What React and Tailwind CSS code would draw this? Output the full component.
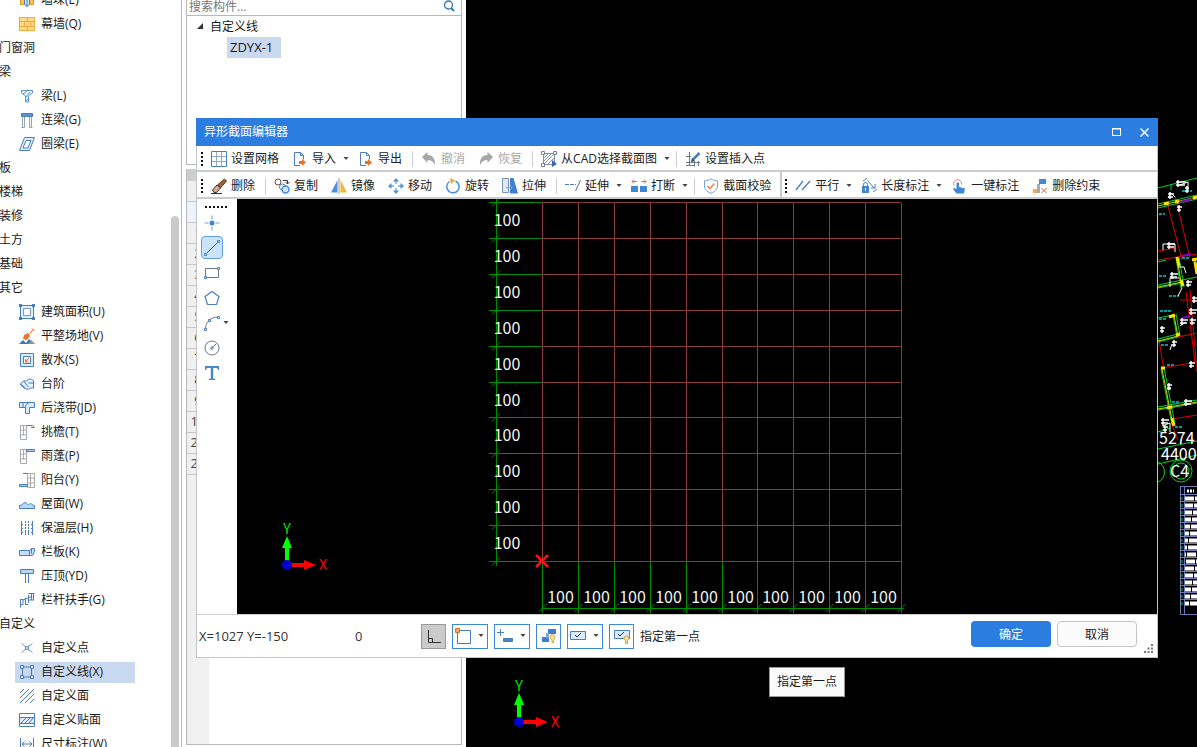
import clsx from 'clsx';

const Icon = ({ children, size = 16 }) => (
  <svg width={size} height={size} viewBox="0 0 16 16" fill="none" stroke="#4a7ebb" className="shrink-0" aria-hidden="true">
    {children}
  </svg>
);

// Small icons, all on a 16x16 grid
const icons = {
  pier: (
    <>
      <path d="M1.500 3.500h4v9h-4zM10.500 3.500h4v9h-4z" fill="#ffc04d" stroke="#e59a1c" />
      <path d="M5.500 5.500l2.500-2 2.500 2v7l-2.500 2-2.500-2zM8 7v7" fill="#cfe6ff" />
    </>
  ),
  curtain: (
    <path d="M.5 1.500h15v13H.5zM.5 5.500h15M.5 10.500h15M8.500 1.500v4M5.500 5.500v5M11.500 5.500v5M8.500 10.500v4" fill="#ffd98c" stroke="#eeab3c" />
  ),
  beam: <path d="M2.500 2.500h11v2.500l-4 3v6h-3v-6l-4-3zM4 6l4-3M7 9l4-5M7 13l3-3" fill="#e9f4ff" stroke="#5f93c9" />,
  link: (
    <>
      <path d="M2.500 1.500h11v3h-11z" fill="#5f95cf" />
      <path d="M3.500 5v10.500M5.500 5v10.500M10.500 5v10.500M12.500 5v10.500M2.500 15.500h3M10.500 15.500h3" stroke="#98a2ad" />
    </>
  ),
  ring: (
    <>
      <path d="M5.500 1.500h10l-5 13H.5z" fill="#dcebff" />
      <path d="M7 4.500h5l-3 7.500H4z" fill="#fff" />
    </>
  ),
  area: (
    <>
      <path d="M1.500 1.500h13v13h-13z" fill="#dcf0ff" />
      <path d="M4.500 4.500h7v7h-7z" fill="#fff" stroke="#8798aa" />
      <path d="M0 0h3v3H0zM13 0h3v3h-3zM0 13h3v3H0zM13 13h3v3h-3z" fill="#4a7ebb" stroke="none" />
    </>
  ),
  level: (
    <>
      <path d="M0 16l4-4 3 3 3-4 6 5z" fill="#3e77b6" stroke="none" />
      <path d="M9 16l3-4 4 4z" fill="#929292" stroke="none" />
      <path d="M14.500 1l-5 6M13 .5l2.500 2.500" stroke="#ed7131" />
      <path d="M9 5l2 3-3 4-4-1 1-4z" fill="#ed7131" stroke="none" />
    </>
  ),
  apron: (
    <>
      <path d="M1.500 1.500h13v13h-13z" fill="#d8ecff" />
      <path d="M4.500 4.500h7v7h-7z" fill="#fff" />
      <path d="M10 6l-3.500 3.500M6.500 7v3h3" stroke="#e0603a" />
    </>
  ),
  steps: <path d="M1.500 8l3-3h3l2-2h3l2 2v7h-3l-1 1h-4l-5-4zM1.500 8l5 4M4.500 5l5 6M9.500 7h5" fill="#e4f1ff" />,
  strip: <path d="M.5 2.500h15v5h-5v6h-4v-6h-6zM6.500 7.500c0-3 2-5 5-5M4 2.500v5" fill="#d9ebff" />,
  eaves: (
    <>
      <path d="M1.500 1.500h6v14h-6zM1.500 6h6M1.500 11h6M4.500 1.500v4.500M4.500 6v5" stroke="#a5aab1" />
      <path d="M7.500 1.500h6l2 2M12 3.500h3" />
    </>
  ),
  canopy: (
    <>
      <path d="M1.500 1.500h6v14h-6zM1.500 6h6M1.500 11h6M4.500 1.500v4.500M4.500 6v5" stroke="#a5aab1" />
      <path d="M7.500 1.500h8v2h-8z" fill="#a9cdf4" />
    </>
  ),
  balcony: (
    <>
      <path d="M8.500 1.500h7v14h-7zM8.500 6h7M8.500 11h7M11.500 1.500v14" stroke="#a5aab1" />
      <path d="M4 1.500h4.500M.5 12.500h8v2h-8z" fill="#a9cdf4" />
    </>
  ),
  roof: <path d="M.5 12.500v-3c3 0 4-3 5.500-3s2 2 3.500 2 1-1 2-1 2 2 4 2v3z" fill="#b8d6f7" />,
  insulation: (
    <>
      <path d="M2.500 1v14M13.500 1v14" />
      <path d="M6.500 1v14M9.500 1v14" strokeDasharray="2 1" />
      <path d="M3 4.500h10M3 8.500h10M3 12.500h10" strokeDasharray="1 2" />
    </>
  ),
  panel: <path d="M.5 6.500h10l2-2h3v3l-2 4H.5zM10.500 6.500v5M12.500 4.500v5" fill="#c5defa" />,
  coping: (
    <>
      <path d="M1.500 1.500h13v4h-13z" fill="#b6d5f8" />
      <path d="M6.500 6v9M9.500 6v9" />
    </>
  ),
  rail: <path d="M1.500 7v8.500M1 7.500h3v5H1.500M6.500 6v7M4 8l5-2M9.500 3v8M6.500 12.500h3M9.500 5h4M12.500 1v7M9.500 1.500h6M10 8h5M14.500 2v6" />,
  point: (
    <>
      <path d="M2.500 3.500L7 7M13.500 3.500L9 7M2.500 12.500L7 9M13.500 12.500L9 9" stroke="#6f93bb" />
      <circle cx="8" cy="8" r="1.500" />
    </>
  ),
  line: (
    <>
      <path d="M3.500 4v8.500M12.500 4v8.500M4 3h8M4 13h8" />
      <path d="M1.500 1.500h3v3h-3zM11.500 1.500h3v3h-3zM1.500 11.500h3v3h-3zM11.500 11.500h3v3h-3z" fill="#dfeaf8" />
    </>
  ),
  face: <path d="M1 5l4-4M1 10l9-9M1 15l14-14M6 15l9-9M11 15l4-4" />,
  veneer: (
    <>
      <path d="M.5 1.500h15v13H.5z" fill="#fff" />
      <path d="M.5 5.500h15v6H.5z" fill="#d9eafe" />
      <path d="M2 11l5-5M6 11l5-5M10 11l4-5" />
    </>
  ),
  dimension: <path d="M1.500 2v12M14.500 2v12M3 8h10M5.500 5.500L3 8l2.500 2.500M10.500 5.500L13 8l-2.500 2.500" />,

  grid: (
    <>
      <path d="M.5.5h15v15H.5z" />
      <path d="M5.500 1v14M10.500 1v14M1 5.500h14M1 10.500h14" stroke="#8fa9c6" />
    </>
  ),
  file: (
    <>
      <path d="M8 14.500H2.500v-13h6l3 3v4M8.500 1.500v3h3" />
      <path d="M7 10h3V8l4 3.500-4 3.500v-2H7z" fill="#e8702a" stroke="none" />
    </>
  ),
  undo: <path d="M1 6l5.500-5v3C11 4 14.500 7 14 14c-1.500-3.500-4-5-7.500-5v3z" fill="#a3a6aa" stroke="none" />,
  redo: <path d="M15 6L9.500 1v3C5 4 1.500 7 2 14c1.500-3.500 4-5 7.500-5v3z" fill="#a3a6aa" stroke="none" />,
  cad: (
    <>
      <path d="M2.500 2.500h11v11h-11zM3 7l4-4M3 10l7-7M3 13l10-10M7 13l6-6" stroke="#7d90a5" />
      <path d="M.5.5h3v3h-3zM12.500.5h3v3h-3zM.5 12.500h3v3h-3z" fill="#fff" stroke="#70859c" />
      <path d="M11 9l5 4-5 3z" fill="#2f6bb5" stroke="none" />
    </>
  ),
  insert: (
    <>
      <path d="M4.500 1v14M1 5.500h5M1 11.500h14M9.500 10v5.500M1 14.500h9M13.500 10v5" stroke="#68798c" />
      <path d="M14.500 2L8 8.500" strokeWidth="2.500" />
      <path d="M6 11l1-4 3 3z" fill="#24466e" stroke="none" />
    </>
  ),
  erase: (
    <>
      <path d="M0 15.500h11" stroke="#333" />
      <path d="M13.500 1l2 2-6 7-3-3z" fill="#9b6533" stroke="#603714" />
      <path d="M6 7l3.500 3-4 4.500H3L1.500 12z" fill="#e6a592" stroke="#333" />
    </>
  ),
  copy: (
    <>
      <circle cx="4" cy="4" r="3" stroke="#555" />
      <path d="M9 2.500h4.500v3M11.500 4l2 2 2-2" stroke="#333" />
      <circle cx="8.500" cy="9" r="3" stroke="#777" />
      <circle cx="11.500" cy="11.500" r="3.500" fill="#cfe7ff" stroke="#3f8ee0" strokeWidth="1.500" />
    </>
  ),
  mirror: (
    <>
      <path d="M6.500 2v12.500H0z" fill="#4d91dc" stroke="none" />
      <path d="M9.500 2v12.500H16z" fill="#f0b63e" stroke="none" />
      <path d="M8 0v16" stroke="#999" />
    </>
  ),
  move: (
    <>
      <path d="M8 1v5M8 10v5M1 8h5M10 8h5" />
      <path d="M8 0l3 3.500H5zM8 16l3-3.500H5zM0 8l3.500-3v6zM16 8l-3.500-3v6z" fill="#4a90e0" stroke="none" />
    </>
  ),
  rotate: (
    <>
      <path d="M10.500 3a6.200 6.200 0 1 1-6 .5" stroke="#4a90d9" strokeWidth="1.500" />
      <path d="M5 0l5 2.500L6 6z" fill="#f0a03c" stroke="none" />
    </>
  ),
  stretch: (
    <>
      <path d="M.5.5h6v14h-6z" fill="#dbe9f8" stroke="#7c93ab" />
      <path d="M8 0h3.500L16 15.500H8z" fill="#3f81cc" stroke="none" />
      <path d="M4 9.500h6M8 7l2.500 2.500L8 12" stroke="#ee8040" />
    </>
  ),
  extend: (
    <>
      <path d="M0 6.500h11" strokeDasharray="4 1" />
      <path d="M15.500 2l-5 11" stroke="#59718c" />
    </>
  ),
  split: (
    <>
      <path d="M0 8h7v6H0zM9 8h7v6H9z" fill="#3f86d4" stroke="none" />
      <path d="M1 3.500h5M3 1.500l-2 2 2 2M10 3.500h5M13 1.500l2 2-2 2" stroke="#e8702a" />
    </>
  ),
  shield: (
    <>
      <path d="M8 .8c2 1.500 4 2 6.500 2v5c0 4-3 6-6.500 7.500C4.500 13.800 1.500 11.800 1.500 7.800v-5c2.500 0 4.500-.5 6.500-2z" stroke="#6f9fd0" />
      <path d="M4.500 8l2.500 2.500 4.500-5" stroke="#ee8040" strokeWidth="1.500" />
    </>
  ),
  parallel: <path d="M1 12l7-9M7 12l8-9" strokeWidth="1.300" />,
  length: (
    <>
      <path d="M1 8h7v7H1z" fill="#4385cb" stroke="none" />
      <path d="M2.500 8V6.500a2 2 0 0 1 4 0V8M2 3l4-3M6.500 2.500l7 8M10 10h4v-4M12 14l4-3" />
      <path d="M4.500 10v3" stroke="#fff" />
    </>
  ),
  touch: (
    <>
      <path d="M3 7.500a4 4 0 1 1 7.500-1" stroke="#ee8450" />
      <path d="M5.500 4.500h2.500V9l6 1.500-1 5H5.500L2 11l1-1 2.500 1z" fill="#3f86d4" stroke="none" />
    </>
  ),
  constraint: (
    <>
      <path d="M7 1h7v5H7z" fill="#4289d8" stroke="none" />
      <path d="M1 11h6v4H1z" fill="#f0a85a" stroke="none" />
      <path d="M5 6h3v9H5z" fill="#a4abb3" stroke="none" />
      <path d="M9.500 10l5 5M14.500 10l-5 5" stroke="#cf5a3c" />
    </>
  ),

  dPoint: (
    <>
      <path d="M8 .5v4M8 11.500v4M.5 8h4M11.500 8h4" stroke="#7d9cbd" />
      <circle cx="8" cy="8" r="2.500" fill="#3f86d4" stroke="none" />
    </>
  ),
  dLine: (
    <>
      <path d="M2 14L14 2" stroke="#4a6076" />
      <path d="M.5 13.500h2v2h-2zM13.500.5h2v2h-2z" fill="#fff" />
    </>
  ),
  dRect: (
    <>
      <path d="M1.500 3.500h13v9h-13z" stroke="#66788c" />
      <path d="M.5 11.500h2v2h-2zM13.500 2.500h2v2h-2z" fill="#fff" />
    </>
  ),
  dPoly: <path d="M8 1.500l7 5-2.500 8h-9L1 6.500z" strokeWidth="1.200" />,
  dArc: (
    <>
      <path d="M1.500 14c0-6 4-12 13-12" stroke="#66788c" />
      <path d="M.5 13.500h2v2h-2zM4.500 4.500h2v2h-2zM13.500 1.500h2v2h-2z" fill="#fff" />
    </>
  ),
  dCircle: (
    <>
      <circle cx="8" cy="8" r="7" stroke="#66788c" />
      <path d="M8 8l4-4" />
      <path d="M7 7h2v2H7z" fill="#fff" />
    </>
  ),
  dText: <path d="M1 1h14v4h-1l-1-2H9.200v10.500l2 .5v1H4.800v-1l2-.5V3H3L2 5H1z" fill="#4a86c8" stroke="none" />,

  ortho: <path d="M2.500 2v12.500H15M2.500 10.500h4v4" stroke="#333" />,
  snap: (
    <>
      <path d="M2.500 2.500h13v13h-13z" />
      <path d="M.5.5h4v4h-4z" fill="#f6a168" stroke="#dc6e2c" />
    </>
  ),
  dynamic: (
    <>
      <path d="M3.500 1v7M0 4.500h7" />
      <path d="M6.500 10.500h9v3h-9z" fill="#4a86cf" />
    </>
  ),
  blocks: (
    <>
      <path d="M7 1h8v5H7zM1 9h7v5H1z" fill="#3f7fcb" stroke="none" />
      <path d="M5 5h3v5H5z" fill="#8aa6c5" stroke="none" />
      <path d="M11 14.500v-2l-1.500-2a2.500 2.500 0 1 1 4 0l-1 2v2z" fill="#ffe59a" stroke="#d3a43c" />
    </>
  ),
  check: (
    <>
      <path d="M.5 3.500h15v8H.5z" fill="#d7eaff" />
      <path d="M5 7l2 2 4-4" stroke="#333" />
    </>
  ),
  hint: (
    <>
      <path d="M.5 2.500h15v8H.5z" fill="#d7eaff" />
      <path d="M4 6l2 2 4-4" stroke="#333" />
      <path d="M11.500 15.500v-3l-1.500-2a2.500 2.500 0 1 1 5 0l-1.500 2v3z" fill="#ffe08a" stroke="#d3a43c" />
    </>
  ),
};

const treeItems = [
  { label: '墙垛(E)', icon: 'pier' },
  { label: '幕墙(Q)', icon: 'curtain' },
  { label: '门窗洞' },
  { label: '梁' },
  { label: '梁(L)', icon: 'beam' },
  { label: '连梁(G)', icon: 'link' },
  { label: '圈梁(E)', icon: 'ring' },
  { label: '板' },
  { label: '楼梯' },
  { label: '装修' },
  { label: '土方' },
  { label: '基础' },
  { label: '其它' },
  { label: '建筑面积(U)', icon: 'area' },
  { label: '平整场地(V)', icon: 'level' },
  { label: '散水(S)', icon: 'apron' },
  { label: '台阶', icon: 'steps' },
  { label: '后浇带(JD)', icon: 'strip' },
  { label: '挑檐(T)', icon: 'eaves' },
  { label: '雨蓬(P)', icon: 'canopy' },
  { label: '阳台(Y)', icon: 'balcony' },
  { label: '屋面(W)', icon: 'roof' },
  { label: '保温层(H)', icon: 'insulation' },
  { label: '栏板(K)', icon: 'panel' },
  { label: '压顶(YD)', icon: 'coping' },
  { label: '栏杆扶手(G)', icon: 'rail' },
  { label: '自定义' },
  { label: '自定义点', icon: 'point' },
  { label: '自定义线(X)', icon: 'line', active: true },
  { label: '自定义面', icon: 'face' },
  { label: '自定义贴面', icon: 'veneer' },
  { label: '尺寸标注(W)', icon: 'dimension' },
];

const rowNumbers = ['', '', '1', '2', '3', '4', '5', '6', '7', '8', '9', '10', '20', '23'];

const fileTools = [
  { label: '设置网格', icon: 'grid' },
  { label: '导入', icon: 'file', menu: true },
  { label: '导出', icon: 'file' },
  null,
  { label: '撤消', icon: 'undo', disabled: true },
  { label: '恢复', icon: 'redo', disabled: true },
  null,
  { label: '从CAD选择截面图', icon: 'cad', menu: true },
  null,
  { label: '设置插入点', icon: 'insert' },
];

const editTools = [
  { label: '删除', icon: 'erase' },
  null,
  { label: '复制', icon: 'copy' },
  { label: '镜像', icon: 'mirror' },
  { label: '移动', icon: 'move' },
  { label: '旋转', icon: 'rotate' },
  { label: '拉伸', icon: 'stretch' },
  null,
  { label: '延伸', icon: 'extend', menu: true },
  { label: '打断', icon: 'split', menu: true },
  null,
  { label: '截面校验', icon: 'shield' },
];

const constraintTools = [
  { label: '平行', icon: 'parallel', menu: true },
  { label: '长度标注', icon: 'length', menu: true },
  { label: '一键标注', icon: 'touch' },
  { label: '删除约束', icon: 'constraint' },
];

const drawTools = [
  { label: '点', icon: 'dPoint' },
  { label: '直线', icon: 'dLine', active: true },
  { label: '矩形', icon: 'dRect' },
  { label: '多边形', icon: 'dPoly' },
  { label: '弧', icon: 'dArc', menu: true },
  { label: '圆', icon: 'dCircle' },
  { label: '文字', icon: 'dText' },
];

const statusTools = [
  { label: '正交', icon: 'ortho', pressed: true },
  { label: '捕捉', icon: 'snap', menu: true },
  { label: '动态输入', icon: 'dynamic', menu: true },
  { label: '约束显示', icon: 'blocks' },
  { label: '校验', icon: 'check', menu: true },
  { label: '提示', icon: 'hint' },
];

const Caret = () => (
  <svg width="8" height="4" viewBox="0 0 8 4" className="shrink-0" aria-hidden="true">
    <path d="M1.500 0h5L4 3z" fill="#444" />
  </svg>
);

const Toolbar = ({ items }) => (
  <div className="flex items-center gap-px pt-0.5">
    <svg width="3" height="16" className="ml-[3px] shrink-0" aria-hidden="true">
      <path d="M1 1v14" stroke="#111" strokeWidth="2" strokeDasharray="2 2" />
    </svg>
    {items.map((item, i) =>
      item ? (
        <button
          key={item.label}
          type="button"
          disabled={item.disabled}
          className={clsx(
            'flex items-center gap-1 pl-1.5 whitespace-nowrap',
            item.menu ? 'pr-px' : 'pr-1.5',
            item.disabled ? 'text-[#a8a8a8]' : 'text-[#222]'
          )}
        >
          <Icon>{icons[item.icon]}</Icon>
          <span className={clsx(item.menu && 'pr-0.5')}>{item.label}</span>
          {item.menu && <Caret />}
        </button>
      ) : (
        <div key={i} className="w-px h-4 ml-[3px] mr-px bg-[#cfcfcf]" />
      )
    )}
  </div>
);

// Coordinate system marker, origin at (x, y)
const Axes = ({ x, y }) => (
  <g transform={`translate(${x} ${y})`} fontFamily="'Noto Sans CJK SC', sans-serif" fontSize="15" textAnchor="middle">
    <path d="M0 0V-20" stroke="#00ff00" strokeWidth="4" />
    <path d="M0-29l5 12H-5z" fill="#00ff00" />
    <path d="M0 0h20" stroke="#ff0000" strokeWidth="4" />
    <path d="M29 0L17-5V5z" fill="#ff0000" />
    <circle r="5" fill="#0000d0" />
    <text x="0" y="-31" fill="#00e000">Y</text>
    <text x="36" y="5" fill="#ff0000">X</text>
  </g>
);

const STEP = 35.9;
const LEFT = 305;
const TOP = 4;
const END = STEP * 10;
const marks = Array.from({ length: 11 }, (_, i) => Math.round(i * STEP) + 0.5);
const spans = marks.slice(0, 10);

const SectionCanvas = () => (
  <svg width="100%" height="100%" className="block" role="img" aria-label="截面网格">
    <g transform={`translate(${LEFT} ${TOP})`}>
      <g stroke="#8a3c3c" fill="none" shapeRendering="crispEdges">
        {marks.map((m) => (
          <path key={m} d={`M${m} 0V${END}M0 ${m - 1}H${END}`} />
        ))}
      </g>
      <g stroke="#008c00" fill="none">
        <path d={`M-45.500-4V${END + 4}M0 ${END + 46.5}H${END + 3}`} />
        {marks.map((m) => (
          <path
            key={m}
            d={`M-53 ${m - 1}H0M-50 ${m + 3}l8-8M${m} ${END}v51M${m - 4} ${END + 50}l8-8`}
          />
        ))}
      </g>
      <g fill="#f4f4f4" fontFamily="'Noto Sans CJK SC', sans-serif" fontSize="16" textAnchor="middle">
        {spans.map((m) => (
          <text key={m} x="-35" y={m + 22}>100</text>
        ))}
        {spans.map((m) => (
          <text key={m} x={m + 18} y={END + 41}>100</text>
        ))}
      </g>
      <path d="M-6 352l12 12M6 352l-12 12" stroke="#ff1010" strokeWidth="2.500" />
    </g>
    <Axes x={50} y={366} />
  </svg>
);

const drawingNotes = [
  [18, 12, 10], [10, 24, 6], [19, 37, 5], [27, 18, 4], [9, 74, 8], [12, 104, 8], [28, 112, 6],
  [34, 128, 6], [2, 158, 5], [14, 172, 5], [22, 150, 8], [31, 140, 8], [32, 150, 6], [31, 193, 6],
  [9, 215, 5], [26, 231, 8], [3, 250, 8], [5, 257, 5],
];

// The part of the floor plan that stays in sight beside the editor
const FloorPlan = () => (
  <svg width="39" height="460" viewBox="0 0 39 460" className="absolute right-0 top-[170px]" aria-hidden="true">
    <g stroke="#e00000" fill="none">
      <path d="M9 32l15 58M17 26l15 62M0 81l18-3M0 90l39-6M20 167l19-4M32 120l7 82M28 122l9 70M4 198l35-6M1 170l5 30M14 249l25-4M14 255l6 15M22 130h17" />
    </g>
    <g stroke="#00d030" fill="none">
      <path d="M0 18l39-10M13 14v6M0 34l39-9M0 38l39-9M0 92l8-2M0 115l24-5M0 118l24-5M24 110l15-3M18 88l5 30M21 87l5 30M36 88l3 12M0 148l15-3M15 145l4 22M18 144l4 22M0 169l20-5M0 172l20-5M3 199l11 56M6 198l11 56M0 237l39-7M0 240l39-7M0 279l39-8M0 294l39-9M0 262l12-4" />
      <circle cx="23" cy="301" r="11" />
      <circle cx="23" cy="301" r="8" />
      <path d="M0 292a11 11 0 0 1 0 20" />
    </g>
    <g stroke="#c8d800" fill="none">
      <path d="M4 199l11 56M19 88l5 30M0 117l24-5M16 145l4 22M0 171l20-5M0 239l39-7M0 36l39-9M37 90l2 10" />
    </g>
    <g stroke="#ffe000" strokeWidth="3" fill="none">
      <path d="M6 34l5-1M17 32l4-1M35 28l4-1M19 87l2 9M23 110l2 6M34 90l5-1M37 92l2 12M11 147l6-2M18 165l4-1M3 198h4M9 238l5-1M14 248l2 8" />
    </g>
    <g stroke="#8000c0" strokeWidth="2">
      <path d="M22 32l12-3M23 86l10-2M24 148l8-2" />
    </g>
    <g stroke="#009898" strokeWidth="2">
      <path d="M1 44h6M24 21h10M1 106h8M11 126h10M2 141h12M1 149h8M3 175h8M9 195h8M14 232h8M17 257h8M24 88h8" strokeDasharray="3 1" />
    </g>
    <g stroke="#fff" fill="none">
      <path d="M19 16l11-4v10M10 28l3-5 4 4M5 80v-6h12v8M12 117v-9h9M20 126l4-8M20 97h6l2 6M22 156l6-4M14 174l-2 6M9 219h4M4 256l8-3v9" />
      {drawingNotes.map(([x, y, w]) => (
        <path key={`${x}-${y}`} d={`M${x} ${y}h${w}M${x} ${y + 3}h${w - 1}M${x + 2} ${y - 2}v7`} strokeWidth="1.500" />
      ))}
    </g>
    <g fill="#fff" fontFamily="'Noto Sans CJK SC', sans-serif" fontSize="16">
      <text x="1" y="274">5274</text>
      <text x="3" y="290">4400</text>
      <text x="12" y="307">C4</text>
    </g>
    <g>
      <path d="M22.500 316v128.500H39M22 316.500h17M26.500 316v128" stroke="#7078b8" fill="none" />
      <path d="M29 321h7" stroke="#fff" strokeWidth="3" strokeDasharray="2 1" />
      {Array.from({ length: 16 }, (_, i) => (
        <g key={i}>
          <path d={`M22 ${324.5 + i * 7}h17`} stroke="#7078b8" />
          <path d={`M27 ${328.5 + i * 7}h12`} stroke="#fff" strokeWidth="4" strokeDasharray="9 1" strokeDashoffset={i} />
          <path d={`M24 ${327 + i * 7}v3`} stroke="#00d030" />
        </g>
      ))}
    </g>
  </svg>
);

const ComponentTree = () => (
  <nav className="relative w-[182px] shrink-0 overflow-hidden border-r border-[#b8b8b8] bg-white">
    <ul className="-mt-3">
      {treeItems.map((item) => (
        <li key={item.label} className="flex h-6 items-center whitespace-nowrap">
          {item.icon ? (
            <button
              type="button"
              className={clsx('ml-[15px] flex h-[21px] w-[120px] items-center gap-1.5 pl-1', item.active && 'bg-[#c9d9ef]')}
            >
              <Icon>{icons[item.icon]}</Icon>
              {item.label}
            </button>
          ) : (
            <button type="button" className="-ml-px">{item.label}</button>
          )}
        </li>
      ))}
    </ul>
    <div className="absolute right-0.5 top-[216px] bottom-0 w-2 rounded-t bg-[#cacaca]" />
  </nav>
);

const ComponentPanel = () => (
  <aside className="flex w-[284px] shrink-0 flex-col gap-1 bg-white pl-1 pr-1 pb-0.5">
    <div className="h-[165px] shrink-0 border border-t-0 border-[#b8b8b8]">
      <label className="flex h-4 items-center border-b border-[#b8b8b8] pr-1.5">
        <input
          type="text"
          aria-label="搜索构件"
          placeholder="搜索构件..."
          className="min-w-0 flex-1 pl-0.5 -mt-0.5 outline-none placeholder:text-[#777]"
        />
        <svg width="12" height="12" viewBox="0 0 12 12" fill="none" stroke="#2f78b7" className="-mt-1" aria-hidden="true">
          <circle cx="5.500" cy="5" r="4" strokeWidth="1.300" />
          <path d="M8 8l3 3" strokeWidth="1.800" />
        </svg>
      </label>
      <div className="flex h-[21px] items-center gap-1.5 pl-2.5">
        <svg width="7" height="7" aria-hidden="true">
          <path d="M6 0v6H0z" fill="#333" />
        </svg>
        自定义线
      </div>
      <button type="button" className="ml-[40px] flex h-[21px] items-center bg-[#c9d9ef] pl-[3px] pr-2 text-[13px]">
        ZDYX-1
      </button>
    </div>
    <div className="flex min-h-0 flex-1 flex-col border border-[#b8b8b8] border-t-0">
      <div className="h-3 shrink-0 bg-[#cdced2]" />
      <div className="min-h-0 w-[22px] flex-1 overflow-hidden bg-[#f0f0f0]">
        {rowNumbers.map((n, i) => (
          <div
            key={i}
            className={clsx(
              'flex h-[21px] items-center justify-center border-b border-[#c4c6c8] text-[13px] text-[#444]',
              i === 1 && 'bg-[#edf3fa]'
            )}
          >
            {n}
          </div>
        ))}
      </div>
    </div>
  </aside>
);

const StatusBar = () => (
  <footer className="flex h-[43px] shrink-0 items-center border-t border-[#d0d0d0] bg-white pl-0.5">
    <span className="w-[156px] pt-0.5 text-[13px] text-[#333]">X=1027 Y=-150</span>
    <span className="w-[66px] pt-0.5 text-[13px] text-[#333]">0</span>
    <div className="flex items-center gap-1.5">
      {statusTools.map((tool) => (
        <button
          key={tool.label}
          type="button"
          aria-label={tool.label}
          className={clsx(
            'flex h-[25px] items-center justify-center border',
            tool.menu ? 'w-9 gap-1.5' : 'w-[25px]',
            tool.pressed ? 'border-[#999] bg-[#cbcbcb]' : 'border-[#3c8ad6] bg-white'
          )}
        >
          <Icon>{icons[tool.icon]}</Icon>
          {tool.menu && <Caret />}
        </button>
      ))}
      <span className="pt-0.5">指定第一点</span>
    </div>
    <div className="mb-1 ml-auto mr-[7px] flex items-center gap-1.5">
      <button type="button" className="h-[26px] w-20 rounded-sm bg-[#2b7de0] pt-0.5 text-white">确定</button>
      <button type="button" className="h-[26px] w-20 rounded-sm border border-[#c4c4c4] bg-[#fbfbfb] pt-0.5">取消</button>
    </div>
    <svg width="9" height="9" fill="#777" className="mr-1 mb-1 self-end" aria-hidden="true">
      <path d="M7 0h2v2H7zM7 3.500h2v2H7zM7 7h2v2H7zM3.500 3.500h2v2h-2zM3.500 7h2v2h-2zM0 7h2v2H0z" />
    </svg>
  </footer>
);

const SectionEditor = () => (
  <section
    role="dialog"
    aria-label="异形截面编辑器"
    className="absolute left-[196px] right-[39px] top-[118px] bottom-[89px] flex flex-col border border-t-0 border-[#c3c6cb] bg-white"
  >
    <header className="-mx-px flex h-7 shrink-0 items-center bg-[#2b7de0] pl-2 text-white">
      <h1 className="flex-1">异形截面编辑器</h1>
      <button type="button" aria-label="最大化" className="flex w-7 justify-center">
        <svg width="9" height="8" fill="none" stroke="#fff">
          <path d="M.5 1h8v6.500h-8zM0 .5h9" />
        </svg>
      </button>
      <button type="button" aria-label="关闭" className="flex w-7 justify-center">
        <svg width="9" height="9" stroke="#fff" strokeWidth="1.500">
          <path d="M.5.5l8 8M8.500.5l-8 8" />
        </svg>
      </button>
    </header>

    <div className="flex h-[26px] shrink-0 border-b-2 border-[#c9cbce] pl-px">
      <Toolbar items={fileTools} />
    </div>
    <div className="flex h-[27px] shrink-0 border-b-2 border-[#c9cbce] pl-px">
      <div className="border-r-2 border-[#c9cbce] flex pr-[3px]">
        <Toolbar items={editTools} />
      </div>
      <Toolbar items={constraintTools} />
    </div>

    <div className="flex min-h-0 flex-1">
      <div className="flex w-10 shrink-0 flex-col items-start pl-1">
        <svg width="23" height="2" className="ml-1 mt-[7px] mb-0.5 shrink-0" aria-hidden="true">
          <path d="M0 1h23" stroke="#111" strokeWidth="2" strokeDasharray="2 2" />
        </svg>
        {drawTools.map((tool) => (
          <button
            key={tool.label}
            type="button"
            aria-label={tool.label}
            className={clsx(
              'my-px flex h-[23px] items-center gap-0.5 rounded-sm border px-0.5',
              tool.active ? 'border-[#5c9fe4] bg-[#cbe3fc]' : 'border-transparent'
            )}
          >
            <Icon>{icons[tool.icon]}</Icon>
            {tool.menu && <Caret />}
          </button>
        ))}
      </div>
      <div className="min-w-0 flex-1 overflow-hidden bg-black">
        <SectionCanvas />
      </div>
    </div>

    <StatusBar />
  </section>
);

export default function App() {
  return (
    <div className="relative flex h-screen overflow-hidden bg-white text-xs text-[#1a1a1a] font-['Open_Sans','Noto_Sans_CJK_SC',sans-serif]">
      <ComponentTree />
      <ComponentPanel />
      <main className="relative min-w-0 flex-1 overflow-hidden bg-black">
        <svg width="100%" height="100%" className="block" role="img" aria-label="绘图区">
          <Axes x={53} y={722} />
        </svg>
        <FloorPlan />
      </main>
      <SectionEditor />
      <div role="tooltip" className="absolute left-[769px] top-[667px] border border-[#999] bg-[#fafafa] px-[7px] py-1.5">
        指定第一点
      </div>
    </div>
  );
}
